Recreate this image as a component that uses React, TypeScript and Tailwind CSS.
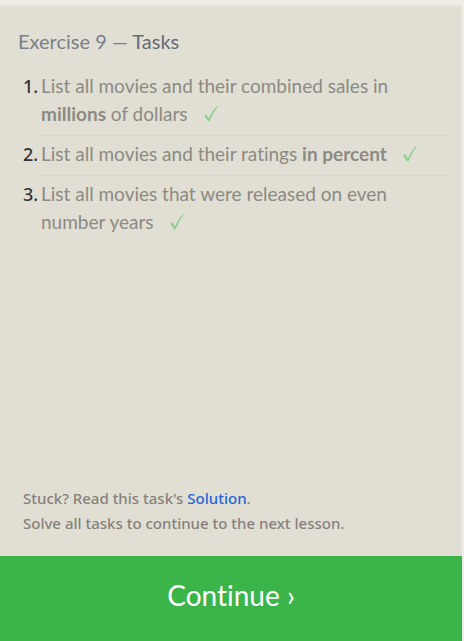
import type { ReactNode } from "react";

function Check() {
  return (
    <svg
      role="img"
      aria-label="Completed"
      viewBox="0 0 14 16"
      className="ml-4 inline-block h-4 w-[14px] align-[-1px]"
    >
      <path
        d="M0.2 9.6 L2.1 8.3 L4.9 12.7 Q8 5.3 12.8 0 L13.7 0.5 Q9.1 6.5 5.4 15.3 L4 15.3 Z"
        fill="#88ce8f"
      />
    </svg>
  );
}

function Task({ number, children }: { number: number; children: ReactNode }) {
  return (
    <li className="flex items-baseline gap-1 text-[19px] leading-7">
      <span className="w-[14px] shrink-0 whitespace-nowrap font-['Noto_Sans',sans-serif] text-lg font-medium leading-6 text-[#333333]">
        {number}.
      </span>
      <div className="grow border-b border-[#d8d6cb] pr-5 pb-[7px] text-[#8c8a84]">
        {children}
        <Check />
      </div>
    </li>
  );
}

export default function App() {
  return (
    <div className="flex min-h-screen flex-col bg-[#f0ede6] pt-[5px] pr-[2px] font-['Lato','Open_Sans',sans-serif] [font-variant-ligatures:none]">
      <main className="flex grow flex-col border-t-2 border-r border-[#e5e3d9] bg-[#e1dfd3]">
        <h1 className="px-[18px] pt-5 text-xl leading-7 text-[#7a808c]">
          Exercise 9 — <span className="text-[#646b79]">Tasks</span>
        </h1>
        <ol className="flex flex-col gap-1 pt-[17px] pr-[10px] pl-[23px] [&>li:last-child>div]:border-b-0">
          <Task number={1}>
            List all movies and their combined sales in{" "}
            <strong>millions</strong> of dollars
          </Task>
          <Task number={2}>
            List all movies and their ratings <strong>in percent</strong>
          </Task>
          <Task number={3}>
            List all movies that were released on even number years
          </Task>
        </ol>
        <div className="mt-auto px-[23px] pb-5 font-['Noto_Sans',sans-serif] text-[15px] font-medium leading-[25px] text-[#877f7d]">
          <p>
            Stuck? Read this task's{" "}
            <a href="#solution" className="text-[#1e67dc]">
              Solution
            </a>
            .
          </p>
          <p>Solve all tasks to continue to the next lesson.</p>
        </div>
      </main>
      <button
        type="button"
        className="h-[85px] bg-[#3bb54a] pb-2 text-[28px] text-white"
      >
        Continue ›
      </button>
    </div>
  );
}
